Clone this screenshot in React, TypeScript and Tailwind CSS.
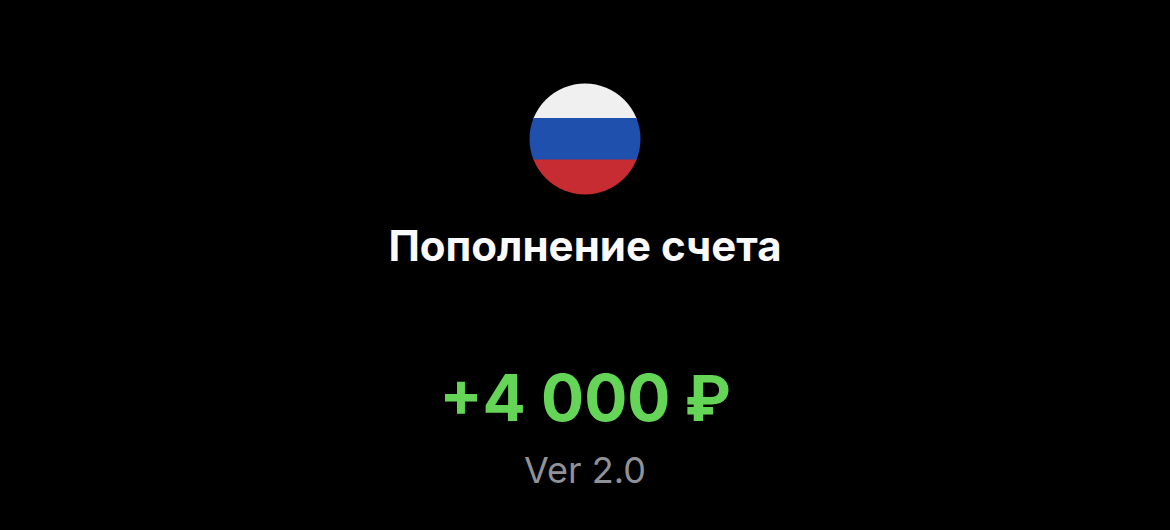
export default function App() {
  return (
    <main className="flex min-h-screen flex-col items-center bg-black pt-[83px] text-center font-['Inter',sans-serif]">
      <svg viewBox="0 0 112 112" className="size-28" role="img" aria-label="Россия">
        <defs>
          <clipPath id="disc">
            <circle cx="56" cy="56" r="55.5" />
          </clipPath>
        </defs>
        <g clipPath="url(#disc)">
          <rect width="112" height="36" fill="#f0f0f0" />
          <rect y="35" width="112" height="42" fill="#2050ad" />
          <rect y="76.5" width="112" height="36" fill="#c62c31" />
        </g>
      </svg>
      <h1 className="mt-[25px] text-[42px] leading-[52px] font-bold text-[#fafafa]">Пополнение счета</h1>
      <p className="mt-[86px] text-[64px] leading-[80px] font-bold text-[#65d558]">
        +4 000 <span className="font-['Roboto',sans-serif] leading-none">₽</span>
      </p>
      <p className="mt-[10px] text-4xl leading-[44px] text-[#919198]">Ver 2.0</p>
    </main>
  );
}
